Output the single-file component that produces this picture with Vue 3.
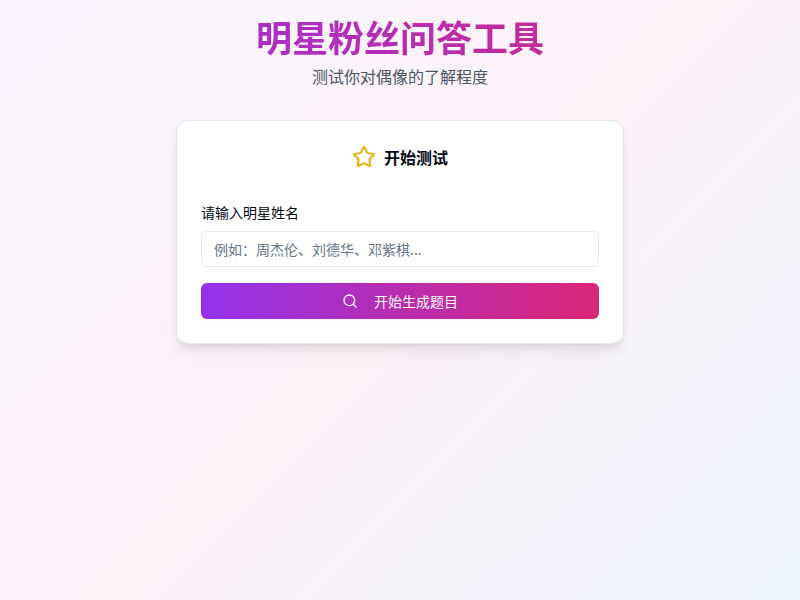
<script setup>
import { ref } from 'vue'
const name = ref('')
</script>

<template>
  <div class="page">
    <header class="head">
      <h1 class="title">明星粉丝问答工具</h1>
      <p class="sub">测试你对偶像的了解程度</p>
    </header>
    <section class="card">
      <div class="card-head">
        <svg class="star" width="24" height="24" viewBox="0 0 24 24" fill="none" stroke="currentColor" stroke-width="2" stroke-linecap="round" stroke-linejoin="round">
          <path d="M11.525 2.295a.53.53 0 0 1 .95 0l2.31 4.679a2.123 2.123 0 0 0 1.595 1.16l5.166.756a.53.53 0 0 1 .294.904l-3.736 3.638a2.123 2.123 0 0 0-.611 1.878l.882 5.14a.53.53 0 0 1-.771.56l-4.618-2.428a2.122 2.122 0 0 0-1.973 0L6.396 21.01a.53.53 0 0 1-.77-.56l.881-5.139a2.122 2.122 0 0 0-.611-1.879L2.16 9.795a.53.53 0 0 1 .294-.906l5.165-.755a2.122 2.122 0 0 0 1.597-1.16z" />
        </svg>
        <h2 class="card-title">开始测试</h2>
      </div>
      <div class="card-body">
        <label class="label" for="star-name">请输入明星姓名</label>
        <input id="star-name" v-model="name" class="input" type="text" placeholder="例如：周杰伦、刘德华、邓紫棋..." />
        <button class="button" type="button">
          <svg width="16" height="16" viewBox="0 0 24 24" fill="none" stroke="currentColor" stroke-width="2" stroke-linecap="round" stroke-linejoin="round">
            <path d="m21 21-4.34-4.34" />
            <circle cx="11" cy="11" r="8" />
          </svg>
          <span>开始生成题目</span>
        </button>
      </div>
    </section>
  </div>
</template>

<style>
html,
body {
  margin: 0;
}
</style>

<style scoped>
.page {
  box-sizing: border-box;
  min-height: 600px;
  padding: 16px;
  background: linear-gradient(135deg, #faf5ff, #fdf2f8, #eff6ff);
  font-family: 'Noto Sans CJK SC', sans-serif;
  color: #020817;
}
.head {
  margin-bottom: 32px;
  text-align: center;
}
.title {
  margin: 0 0 8px;
  font-size: 36px;
  line-height: 40px;
  font-weight: 700;
  background: linear-gradient(90deg, #9333ea, #db2777);
  background-clip: text;
  -webkit-background-clip: text;
  color: transparent;
}
.sub {
  margin: 0;
  font-size: 16px;
  line-height: 24px;
  color: #4b5563;
}
.card {
  box-sizing: border-box;
  width: 448px;
  margin: 0 auto;
  background: #fff;
  border: 1px solid #e2e8f0;
  border-radius: 12px;
  box-shadow: 0 10px 15px -3px rgba(0, 0, 0, 0.1), 0 4px 6px -4px rgba(0, 0, 0, 0.1);
}
.card-head {
  display: flex;
  justify-content: center;
  align-items: center;
  gap: 8px;
  padding: 24px 24px 34px;
}
.star {
  color: #eab308;
}
.card-title {
  margin: 0;
  font-size: 16px;
  line-height: 24px;
  font-weight: 600;
}
.card-body {
  display: flex;
  flex-direction: column;
  padding: 0 24px 24px;
}
.label {
  margin-bottom: 10px;
  font-size: 14px;
  line-height: 18px;
  font-weight: 400;
}
.input {
  box-sizing: border-box;
  height: 36px;
  margin-bottom: 16px;
  padding: 8px 12px;
  border: 1px solid #e2e8f0;
  border-radius: 6px;
  background: #fff;
  font: inherit;
  font-size: 14px;
  outline: none;
}
.input::placeholder {
  color: #64748b;
}
.button {
  display: flex;
  justify-content: center;
  align-items: center;
  gap: 16px;
  height: 36px;
  padding: 0 16px;
  border: 0;
  border-radius: 6px;
  background: linear-gradient(90deg, #9333ea, #db2777);
  color: #f8fafc;
  font: inherit;
  font-size: 14px;
  font-weight: 400;
  box-shadow: 0 1px 2px rgba(0, 0, 0, 0.05);
}
</style>
